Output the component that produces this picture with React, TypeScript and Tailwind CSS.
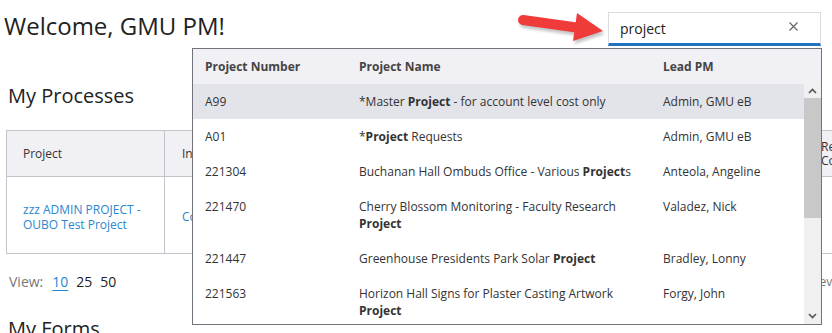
import React from "react";

type Row = { num: string; name: React.ReactNode; pm: string; hl?: boolean };

const B = ({ children }: { children: React.ReactNode }) => <span className="font-bold">{children}</span>;

const rows: Row[] = [
  { num: "A99", name: <>*Master <B>Project</B> - for account level cost only</>, pm: "Admin, GMU eB", hl: true },
  { num: "A01", name: <>*<B>Project</B> Requests</>, pm: "Admin, GMU eB" },
  { num: "221304", name: <>Buchanan Hall Ombuds Office - Various <B>Project</B>s</>, pm: "Anteola, Angeline" },
  { num: "221470", name: <>Cherry Blossom Monitoring - Faculty Research <B>Project</B></>, pm: "Valadez, Nick" },
  { num: "221447", name: <>Greenhouse Presidents Park Solar <B>Project</B></>, pm: "Bradley, Lonny" },
  { num: "221563", name: <>Horizon Hall Signs for Plaster Casting Artwork <B>Project</B></>, pm: "Forgy, John" },
];

export default function App() {
  return (
    <div className="relative w-[832px] h-[333px] overflow-hidden bg-white font-['Open_Sans','Liberation_Sans',sans-serif] text-[#222]">
      {/* Page flow */}
      <div className="flex items-start justify-between">
        <h1 className="ml-[4px] mt-[10px] text-[24px] leading-[32px] text-[#222]">Welcome, GMU PM!</h1>
        <div className="mt-[12px] mr-[11px] w-[213px] h-[34px] border border-[#dcdcdc] border-b-[3px] border-b-[#1f73c0] flex items-center justify-between pl-[11px] pr-[22px]">
          <span className="text-[14px] text-[#222]">project</span>
          <svg width="9" height="9" viewBox="0 0 9 9" className="mt-[-3px]">
            <path d="M0.5 0.5 L8.5 8.5 M8.5 0.5 L0.5 8.5" stroke="#666" strokeWidth="1.2" />
          </svg>
        </div>
      </div>

      <h2 className="ml-[8px] mt-[36px] text-[20px] leading-[28px] text-[#222]">My Processes</h2>

      <div className="ml-[6px] mt-[20px] w-[1000px] border border-[#c4c3cb] text-[12px]">
        <div className="flex h-[46px] bg-[#f1f0f5] border-b border-[#c4c3cb]">
          <div className="w-[158px] border-r border-[#c4c3cb] pl-[16px] flex items-center text-[#333]">Project</div>
          <div className="w-[656px] border-r border-[#c4c3cb] pl-[17px] flex items-center text-[#333]">Initiated</div>
          <div className="flex-1 flex flex-col justify-center leading-[14px] text-[#333]">
            <span>Requested</span>
            <span>Completed</span>
          </div>
        </div>
        <div className="flex h-[76px]">
          <div className="w-[158px] border-r border-[#c4c3cb] pl-[16px] pt-[4px] flex flex-col justify-center leading-[15px] text-[#2a86d1]">
            <span>zzz ADMIN PROJECT -</span>
            <span>OUBO Test Project</span>
          </div>
          <div className="w-[656px] border-r border-[#c4c3cb] pl-[17px] pt-[3px] flex items-center text-[#2a86d1]">Completed</div>
          <div className="flex-1" />
        </div>
      </div>

      <div className="ml-[9px] mt-[18px] flex items-center whitespace-nowrap text-[14px] leading-[20px]">
        <span className="text-[#777]">View:</span>
        <span className="ml-[9px] text-[#2a86d1] underline underline-offset-[3px]">10</span>
        <span className="ml-[8px] text-[#222]">25</span>
        <span className="ml-[8px] text-[#222]">50</span>
        <span className="ml-[691px] text-[12px] text-[#777]">Preview</span>
      </div>

      <h2 className="ml-[8px] mt-[23px] text-[20px] leading-[28px] text-[#222]">My Forms</h2>

      {/* Dropdown overlay */}
      <div className="absolute left-[192px] top-[48px] w-[630px] h-[277px] border border-[#70727c] bg-white text-[12px] text-[#333] flex flex-col">
        <div className="flex h-[35px] items-center bg-[#f1f0f5] font-bold text-[#444]">
          <div className="w-[166px] pl-[12px]">Project Number</div>
          <div className="w-[304px]">Project Name</div>
          <div className="flex-1">Lead PM</div>
        </div>
        <div className="flex flex-1 overflow-hidden">
          <div className="flex-1 overflow-hidden">
            {rows.map((r) => (
              <div key={r.num} className={`flex py-[9px] leading-[17px] ${r.hl ? "bg-[#e3e3ea]" : ""}`}>
                <div className="w-[166px] pl-[12px]">{r.num}</div>
                <div className="w-[304px] pr-[14px]">{r.name}</div>
                <div className="flex-1">{r.pm}</div>
              </div>
            ))}
          </div>
          <div className="w-[17px] bg-[#f0f0f0] flex flex-col">
            <div className="h-[14px] flex items-center justify-center">
              <svg width="9" height="6" viewBox="0 0 9 6">
                <path d="M1 5 L4.5 1.5 L8 5" stroke="#555" strokeWidth="1.6" fill="none" />
              </svg>
            </div>
            <div className="h-[120px] bg-[#c8c8c8]" />
            <div className="flex-1" />
            <div className="h-[16px] flex items-center justify-center">
              <svg width="9" height="6" viewBox="0 0 9 6">
                <path d="M1 1 L4.5 4.5 L8 1" stroke="#555" strokeWidth="1.6" fill="none" />
              </svg>
            </div>
          </div>
        </div>
      </div>

      {/* Red arrow annotation */}
      <svg className="absolute left-0 top-0" width="832" height="333" viewBox="0 0 832 333">
        <defs>
          <filter id="sh" x="-20%" y="-50%" width="140%" height="200%">
            <feGaussianBlur stdDeviation="1.5" />
          </filter>
        </defs>
        <g transform="translate(1.5,3)" opacity="0.35" filter="url(#sh)">
          <line x1="523" y1="20" x2="580" y2="28" stroke="#555" strokeWidth="10" strokeLinecap="round" />
          <polygon points="577,13 603,31 573,41" fill="#555" />
        </g>
        <line x1="523" y1="20" x2="580" y2="28" stroke="#f03b3b" strokeWidth="10" strokeLinecap="round" />
        <polygon points="577,13 603,31 573,41" fill="#f03b3b" />
      </svg>
    </div>
  );
}
